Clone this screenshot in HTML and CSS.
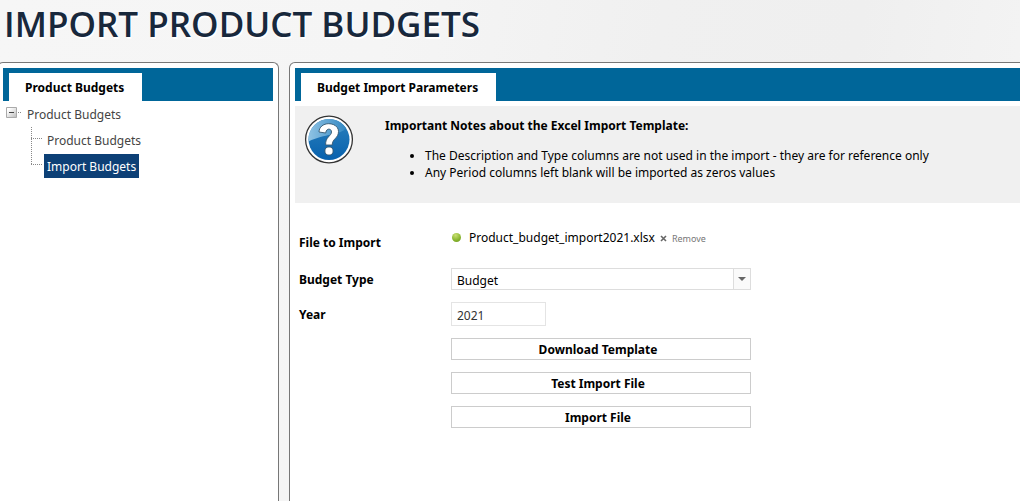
FILE: index.html
```html
<!DOCTYPE html>
<html lang="en">
<head>
<meta charset="utf-8">
<title>Import Product Budgets</title>
<link rel="stylesheet" href="styles.css">
</head>
<body>
<h1 class="page-title">IMPORT PRODUCT BUDGETS</h1>
<div class="columns">
  <aside class="panel panel-nav">
    <div class="tab-bar"><h2 class="tab">Product Budgets</h2></div>
    <ul class="tree">
      <li>
        <div class="tree-root">
          <button class="toggle" type="button" aria-label="Collapse Product Budgets">
            <svg width="16" height="14" viewBox="0 0 16 14"><defs><linearGradient id="tg" x1="0" y1="0" x2="1" y2="1"><stop offset="0.2" stop-color="#fff"/><stop offset="1" stop-color="#bbb"/></linearGradient></defs><path d="M.5.5h10v10H.5z" fill="url(#tg)" stroke="#aaa"/><path d="M3 5.500h5" stroke="#444"/><path d="M12 5.500h1M14 5.500h1" stroke="#888"/></svg>
          </button>
          <a class="node" href="#budgets">Product Budgets</a>
        </div>
        <ul class="branch">
          <li class="leaf"><a class="node" href="#product">Product Budgets</a></li>
          <li class="leaf"><a class="node node-active" href="#import" aria-current="page">Import Budgets</a></li>
        </ul>
      </li>
    </ul>
  </aside>
  <main class="panel panel-main">
    <div class="tab-bar"><h2 class="tab">Budget Import Parameters</h2></div>
    <section class="notes">
      <svg class="help" width="50" height="50" viewBox="0 0 50 50" aria-hidden="true">
        <defs>
          <linearGradient id="disc" x1="0" y1="0" x2="0" y2="1"><stop offset="0" stop-color="#2a80bd"/><stop offset="1" stop-color="#0861ad"/></linearGradient>
          <linearGradient id="shine" x1="0" y1="0" x2="1" y2="0"><stop offset="0" stop-color="#8fc3e4"/><stop offset="1" stop-color="#3488c2"/></linearGradient>
        </defs>
        <circle cx="25" cy="25.500" r="23.400" fill="#fff" stroke="#333" stroke-width="1.300"/>
        <circle cx="25" cy="25.500" r="20.500" fill="url(#disc)"/>
        <path d="M4.600 27.500A20.500 20.500 0 0 1 42 14C36.500 21.500 20.500 19.500 4.600 27.500Z" fill="url(#shine)"/>
        <path d="M15 18C15.500 6.500 34.500 7.500 34.500 17.500C34.500 24.500 28.200 24.500 28.200 31H21.700C21 23 27.500 22 27.500 18C27.500 14 22 14 21.700 19Z" fill="#fff" stroke="#34576f" stroke-width=".9"/>
        <circle cx="25" cy="37" r="4.100" fill="#fff" stroke="#34576f" stroke-width=".9"/>
      </svg>
      <div>
        <h3 class="notes-title">Important Notes about the Excel Import Template:</h3>
        <ul class="notes-list">
          <li>The Description and Type columns are not used in the import - they are for reference only</li>
          <li>Any Period columns left blank will be imported as zeros values</li>
        </ul>
      </div>
    </section>
    <form class="form">
      <span class="label">File to Import</span>
      <div class="file"><span class="dot"></span><span class="file-name">Product_budget_import2021.xlsx</span><button class="remove" type="button"><svg width="7" height="7" viewBox="0 0 7 7" aria-hidden="true"><path d="M1 1l5 5M6 1L1 6" stroke="#666" stroke-width="1.600"/></svg>Remove</button></div>
      <label class="label" for="type">Budget Type</label>
      <div class="combo"><select id="type"><option>Budget</option></select><span class="combo-arrow"><svg width="8" height="4" viewBox="0 0 8 4"><path d="M0 0h8L4 4z" fill="#666"/></svg></span></div>
      <label class="label" for="year">Year</label>
      <input class="year" id="year" type="text" value="2021">
      <div class="actions">
        <button class="action" type="button">Download Template</button>
        <button class="action" type="button">Test Import File</button>
        <button class="action" type="button">Import File</button>
      </div>
    </form>
  </main>
</div>
</body>
</html>
```
FILE: styles.css
```css
* { box-sizing: border-box; }
html { height: 100%; }
body {
  margin: 0;
  min-height: 100%;
  display: flex;
  flex-direction: column;
  overflow: hidden;
  background: linear-gradient(100deg, #f6f6f6 0%, #f5f5f5 35%, #f0f0f0 60%, #efefef 78%, #f5f5f5 100%);
  font: 12px/17px "Noto Sans", "Open Sans", sans-serif;
  color: #000;
}
h1, h2, h3, ul { margin: 0; padding: 0; }
ul { list-style: none; }
a { text-decoration: none; }
button, input, select { font: inherit; }
svg { display: block; }
.page-title {
  padding: 0 4px;
  height: 62px;
  font-family: "Open Sans", "Noto Sans", sans-serif;
  font-size: 35px;
  line-height: 47px;
  font-weight: 600;
  color: #18283c;
  text-shadow: 1px 2px 1px #fff;
  white-space: nowrap;
}
.columns { flex: 1; display: flex; gap: 10px; margin: 0 -8px 0 -3px; }
.panel {
  border: 1px solid #777;
  border-bottom: 0;
  border-radius: 6px 6px 0 0;
  background: #fff;
  padding: 5px;
}
.panel-nav { flex: 0 0 282px; }
.panel-main { flex: 1; min-width: 0; }
.tab-bar { display: flex; padding: 5px 6px 0; background: #006699; }
.tab { padding: 2px 18px 0 16px; background: #fff; font-size: 12px; line-height: 26px; font-weight: 700; white-space: nowrap; }
.tree-root { display: flex; align-items: center; height: 26px; padding-left: 3px; }
.toggle { padding: 0; border: 0; background: none; }
.tree-root .node { margin-left: 2px; }
.node { padding: 2px 3px 0; line-height: 22px; color: #444; }
.branch { padding-left: 28px; }
.leaf { display: flex; align-items: center; height: 26px; }
.leaf::before {
  content: "";
  width: 13px;
  height: 26px;
  background:
    repeating-linear-gradient(90deg, #888 0 1px, transparent 1px 2px) 0 11px / 12px 1px no-repeat,
    repeating-linear-gradient(#888 0 1px, transparent 1px 2px) 0 0 / 1px 26px no-repeat;
}
.leaf:last-child::before { background-size: 12px 1px, 1px 12px; }
.node-active { background: #0d4076; color: #fff; }
.notes { display: flex; gap: 31px; margin-top: 5px; padding: 8px 9px 22px; background: #f0f0f0; }
.help { flex: none; }
.notes-title { padding-top: 3px; font-size: 12px; line-height: 17px; font-weight: 700; }
.notes-list { margin-top: 13px; padding-left: 40px; list-style: disc; }
.form { display: grid; grid-template-columns: 152px 300px; padding: 24px 4px 0; row-gap: 12px; align-items: center; }
.label { padding-top: 1px; font-weight: 700; }
.file { display: flex; align-items: center; height: 29px; padding: 0 0 8px 1px; white-space: nowrap; }
.dot { flex: none; width: 9px; height: 9px; border-radius: 50%; background: radial-gradient(circle at 40% 25%, #c9df72, #86b32d 60%, #6d9623); }
.file-name { margin-left: 8px; }
.remove { display: flex; align-items: center; gap: 5px; margin-left: 5px; padding: 2px 0 0; border: 0; background: none; color: #777; font-size: 9px; line-height: 17px; }
.combo { position: relative; height: 22px; }
.combo select { appearance: none; width: 100%; height: 22px; padding: 2px 22px 0 5px; border: 1px solid #ddd; border-radius: 0; background: #fff; color: #000; }
.combo-arrow { position: absolute; top: 1px; right: 1px; bottom: 1px; width: 17px; display: grid; place-items: center; border-left: 1px solid #ddd; background: #fafafa; pointer-events: none; }
.year { width: 95px; height: 24px; padding: 2px 5px 0; border: 1px solid #e4e4e4; color: #333; }
.actions { grid-column: 2; display: grid; gap: 12px; }
.action { height: 22px; padding: 2px 6px 0 0; border: 1px solid #ccc; background: #fff; font-weight: 700; line-height: 18px; color: #000; }
```
